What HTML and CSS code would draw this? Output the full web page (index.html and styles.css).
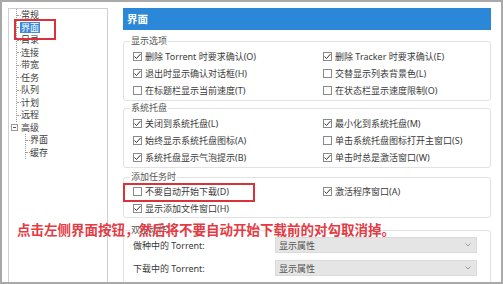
FILE: index.html
```html
<!DOCTYPE html>
<html>

<head>
    <meta charset="utf-8">
    <link rel="stylesheet" href="styles.css">
</head>

<body>
    <div class="window">
        <div class="tree">
            <div class="branch">
                <div class="node">常规</div>
                <div class="node"><span class="selected">界面</span></div>
                <div class="node">目录</div>
                <div class="node">连接</div>
                <div class="node">带宽</div>
                <div class="node">任务</div>
                <div class="node">队列</div>
                <div class="node">计划</div>
                <div class="node">远程</div>
            </div>
            <div class="node parent"><span class="toggle"></span>高级</div>
            <div class="branch sub">
                <div class="node">界面</div>
                <div class="node">缓存</div>
            </div>
        </div>

        <div class="pane">
            <div class="title">界面</div>

            <fieldset class="group first">
                <legend>显示选项</legend>
                <div class="options">
                    <div class="check on"><span class="box"><svg viewBox="0 0 9 9"><polyline points="1.5,4.5 3.5,6.5 7.5,2" /></svg></span>删除 Torrent 时要求确认(O)</div>
                    <div class="check on"><span class="box"><svg viewBox="0 0 9 9"><polyline points="1.5,4.5 3.5,6.5 7.5,2" /></svg></span>删除 Tracker 时要求确认(E)</div>
                    <div class="check on"><span class="box"><svg viewBox="0 0 9 9"><polyline points="1.5,4.5 3.5,6.5 7.5,2" /></svg></span>退出时显示确认对话框(H)</div>
                    <div class="check"><span class="box"></span>交替显示列表背景色(L)</div>
                    <div class="check"><span class="box"></span>在标题栏显示当前速度(T)</div>
                    <div class="check"><span class="box"></span>在状态栏显示速度限制(O)</div>
                </div>
            </fieldset>

            <fieldset class="group tray">
                <legend>系统托盘</legend>
                <div class="options">
                    <div class="check on"><span class="box"><svg viewBox="0 0 9 9"><polyline points="1.5,4.5 3.5,6.5 7.5,2" /></svg></span>关闭到系统托盘(L)</div>
                    <div class="check on"><span class="box"><svg viewBox="0 0 9 9"><polyline points="1.5,4.5 3.5,6.5 7.5,2" /></svg></span>最小化到系统托盘(M)</div>
                    <div class="check on"><span class="box"><svg viewBox="0 0 9 9"><polyline points="1.5,4.5 3.5,6.5 7.5,2" /></svg></span>始终显示系统托盘图标(A)</div>
                    <div class="check"><span class="box"></span>单击系统托盘图标打开主窗口(S)</div>
                    <div class="check on"><span class="box"><svg viewBox="0 0 9 9"><polyline points="1.5,4.5 3.5,6.5 7.5,2" /></svg></span>系统托盘显示气泡提示(B)</div>
                    <div class="check on"><span class="box"><svg viewBox="0 0 9 9"><polyline points="1.5,4.5 3.5,6.5 7.5,2" /></svg></span>单击时总是激活窗口(W)</div>
                </div>
            </fieldset>

            <fieldset class="group adding">
                <legend>添加任务时</legend>
                <div class="options">
                    <div class="check"><span class="box"></span>不要自动开始下载(D)</div>
                    <div class="check on"><span class="box"><svg viewBox="0 0 9 9"><polyline points="1.5,4.5 3.5,6.5 7.5,2" /></svg></span>激活程序窗口(A)</div>
                    <div class="check on"><span class="box"><svg viewBox="0 0 9 9"><polyline points="1.5,4.5 3.5,6.5 7.5,2" /></svg></span>显示添加文件窗口(H)</div>
                </div>
            </fieldset>

            <fieldset class="group actions">
                <legend>双击动作</legend>
                <div class="field">
                    <span class="field-label">做种中的 Torrent:</span>
                    <div class="select">显示属性<svg viewBox="0 0 6 4"><polyline points="0.5,0.5 3,3 5.5,0.5" /></svg></div>
                </div>
                <div class="field">
                    <span class="field-label">下载中的 Torrent:</span>
                    <div class="select">显示属性<svg viewBox="0 0 6 4"><polyline points="0.5,0.5 3,3 5.5,0.5" /></svg></div>
                </div>
            </fieldset>
        </div>

        <div class="mark tree-mark"></div>
        <div class="mark option-mark"></div>
        <div class="note">点击左侧界面按钮，然后将不要自动开始下载前的对勾取消掉。</div>
    </div>
</body>

</html>
```

FILE: styles.css
```css
html,
body {
    margin: 0;
    background-color: #fff;
}

body {
    font-family: "Noto Sans", "Noto Sans CJK SC", sans-serif;
    font-size: 9px;
    color: #3a3a3a;
}

.window {
    position: relative;
    box-sizing: border-box;
    width: 503px;
    height: 284px;
    border: 2px solid #a9a9a9;
    padding: 6px 10px 0 6px;
    display: flex;
    gap: 15px;
    overflow: hidden;
    background-color: #fff;
}

/* left tree */

.tree {
    width: 100px;
    box-sizing: border-box;
    border: 1px solid #cfcfcf;
    border-bottom: none;
    padding-left: 7px;
    flex-shrink: 0;
}

.branch {
    border-left: 1px dotted #9a9a9a;
}

.node {
    display: flex;
    align-items: center;
    height: 12.5px;
    line-height: 12.5px;
    white-space: nowrap;
}

.branch .node::before {
    content: "";
    width: 4px;
    border-top: 1px dotted #9a9a9a;
}

.selected {
    background-color: #3d8ad6;
    color: #fff;
    padding: 0 1px;
    margin-left: -1px;
    line-height: 11px;
}

.parent {
    margin-left: -5px;
}

.toggle {
    box-sizing: border-box;
    width: 7px;
    height: 7px;
    border: 1px solid #9a9a9a;
    margin-right: 3px;
    display: flex;
    align-items: center;
    justify-content: center;
}

.toggle::after {
    content: "";
    width: 3px;
    border-top: 1px solid #555;
}

.sub {
    margin-left: 9px;
    height: 25px;
}

/* right pane */

.pane {
    width: 368px;
    display: flex;
    flex-direction: column;
    flex-shrink: 0;
}

.title {
    height: 22px;
    line-height: 22px;
    background-color: #2b88d8;
    color: #fff;
    font-weight: bold;
    font-size: 10.5px;
    padding-left: 4px;
}

.group {
    margin: 1px 0 0 0;
    padding: 1px 0 1px 9px;
    border: 1px solid #e2e2e2;
    border-radius: 3px;
    min-width: 0;
    background-color: #fff;
}

.group legend {
    padding: 0 1px;
    margin-left: -3px;
    line-height: 12px;
    color: #555;
}

.first {
    margin-top: 5px;
}

.adding {
    margin-top: 3px;
    padding-top: 0;
    padding-bottom: 0;
}

.actions {
    margin-top: 6px;
    padding-top: 1px;
    padding-bottom: 40px;
}

.options {
    display: grid;
    grid-template-columns: 190px 1fr;
    grid-auto-rows: 17px;
}

.check {
    display: flex;
    align-items: center;
    gap: 3px;
    white-space: nowrap;
}

.box {
    box-sizing: border-box;
    width: 9px;
    height: 9px;
    border: 1px solid #8a8a8a;
    background-color: #fff;
    flex-shrink: 0;
    display: flex;
}

.box svg {
    width: 9px;
    height: 9px;
    margin: -1px;
    fill: none;
    stroke: #333;
    stroke-width: 1;
}

.field {
    display: flex;
    align-items: center;
    height: 16px;
    margin-bottom: 7px;
}

.field-label {
    width: 142px;
    flex-shrink: 0;
}

.select {
    box-sizing: border-box;
    width: 202px;
    height: 16px;
    background-color: #e5e5e5;
    border: 1px solid #dadada;
    color: #555;
    padding: 0 5px 0 3px;
    display: flex;
    align-items: center;
    justify-content: space-between;
}

.select svg {
    width: 6px;
    height: 4px;
    fill: none;
    stroke: #999;
    stroke-width: 1;
}

/* red annotations */

.mark {
    position: absolute;
    box-sizing: border-box;
    border: 2px solid #d8333b;
}

.tree-mark {
    left: 12px;
    top: 17px;
    width: 42px;
    height: 21px;
}

.option-mark {
    left: 121px;
    top: 181px;
    width: 132px;
    height: 19px;
}

.note {
    position: absolute;
    left: 15px;
    top: 219px;
    font-family: "Noto Sans CJK SC", sans-serif;
    font-weight: bold;
    font-size: 13.5px;
    line-height: 16px;
    color: #e53a43;
    white-space: nowrap;
}
```
